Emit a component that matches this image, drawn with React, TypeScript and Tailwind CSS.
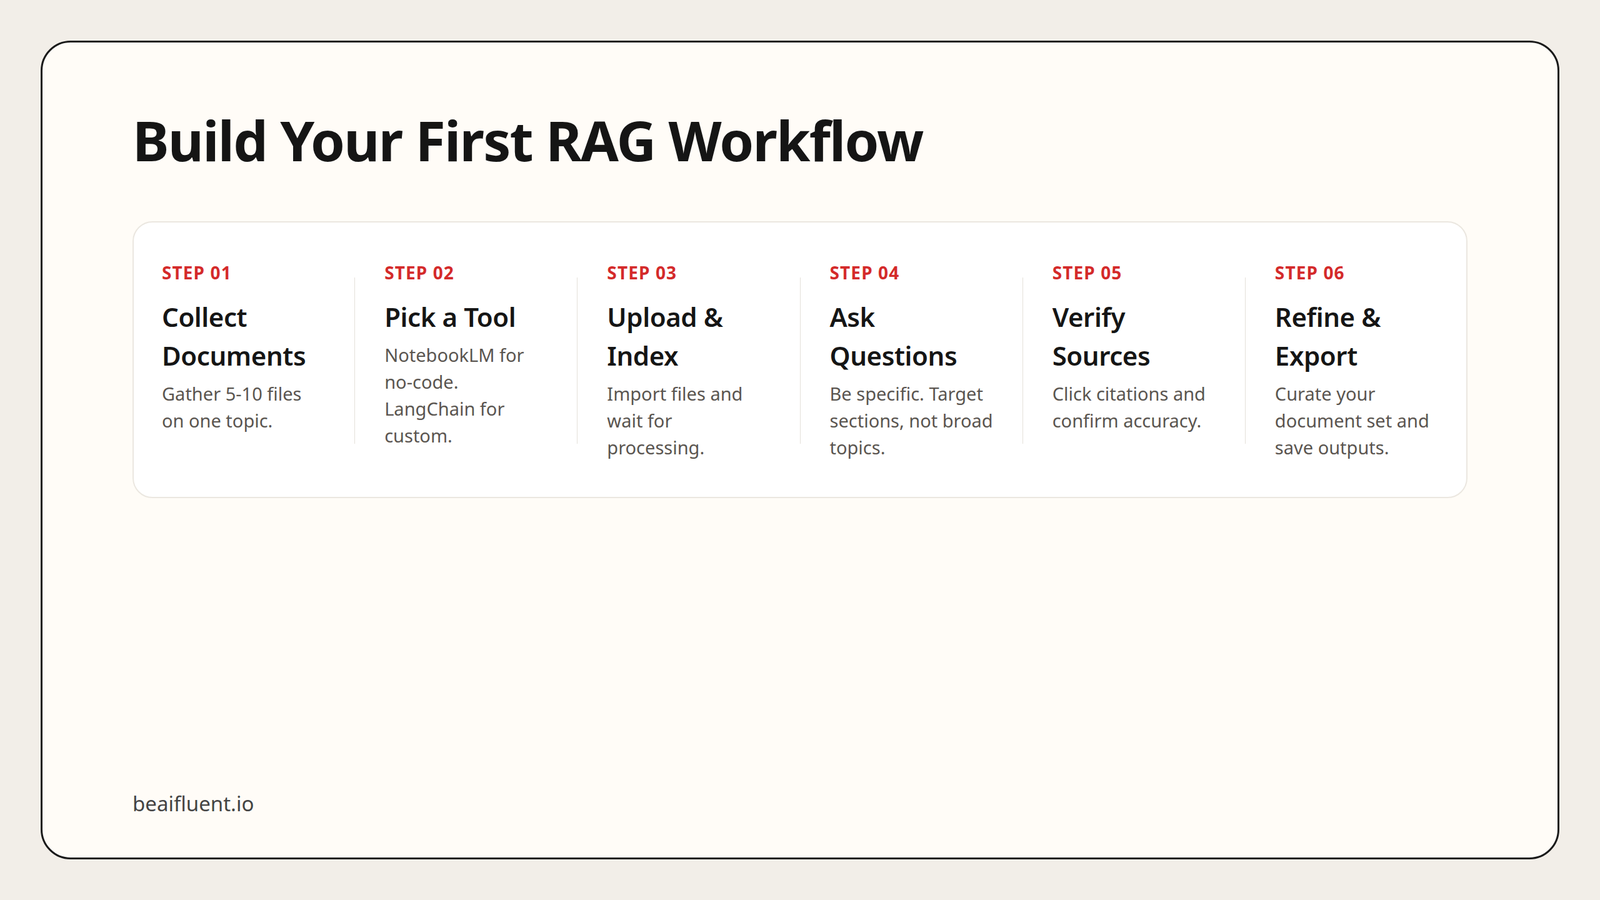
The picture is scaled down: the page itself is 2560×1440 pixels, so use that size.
const steps = [
  { n: "01", title: "Collect Documents", body: "Gather 5-10 files on one topic." },
  { n: "02", title: "Pick a Tool", body: "NotebookLM for no-code. LangChain for custom." },
  { n: "03", title: "Upload & Index", body: "Import files and wait for processing." },
  { n: "04", title: "Ask Questions", body: "Be specific. Target sections, not broad topics." },
  { n: "05", title: "Verify Sources", body: "Click citations and confirm accuracy." },
  { n: "06", title: "Refine & Export", body: "Curate your document set and save outputs." },
];

export default function App() {
  return (
    <div className="h-[1440px] w-full bg-[#f2eee8] p-[65px] font-['Inter',sans-serif]">
      <div className="flex h-full flex-col rounded-[48px] border-[3px] border-[#1a1a1a] bg-[#fffcf7] px-[144px] pt-[112px] pb-[62px]">
        <h1 className="text-[88px] font-bold leading-none tracking-[-0.02em] text-[#151515]">
          Build Your First RAG Workflow
        </h1>

        <div className="mt-[86px] flex rounded-[32px] border-2 border-[#ebe7e0] bg-white px-[45px] pt-[66px] pb-[58px]">
          {steps.map((s, i) => (
            <div key={s.n} className="contents">
              {i > 0 && <div className="mx-[47px] mt-[22px] h-[266px] w-px shrink-0 bg-[#e4e0d9]" />}
              <div className="min-w-0 flex-1">
                <div className="text-[28px] font-bold leading-none tracking-[0.04em] text-[#d42a2a]">
                  STEP {s.n}
                </div>
                <h3 className="mt-[26px] text-[42px] font-semibold leading-[62px] tracking-[-0.01em] text-[#151515]">
                  {s.title}
                </h3>
                <p className="mt-[8px] text-[29px] leading-[43px] text-[#5a5550]">{s.body}</p>
              </div>
            </div>
          ))}
        </div>

        <div className="mt-auto text-[33px] text-[#444]">beaifluent.io</div>
      </div>
    </div>
  );
}
